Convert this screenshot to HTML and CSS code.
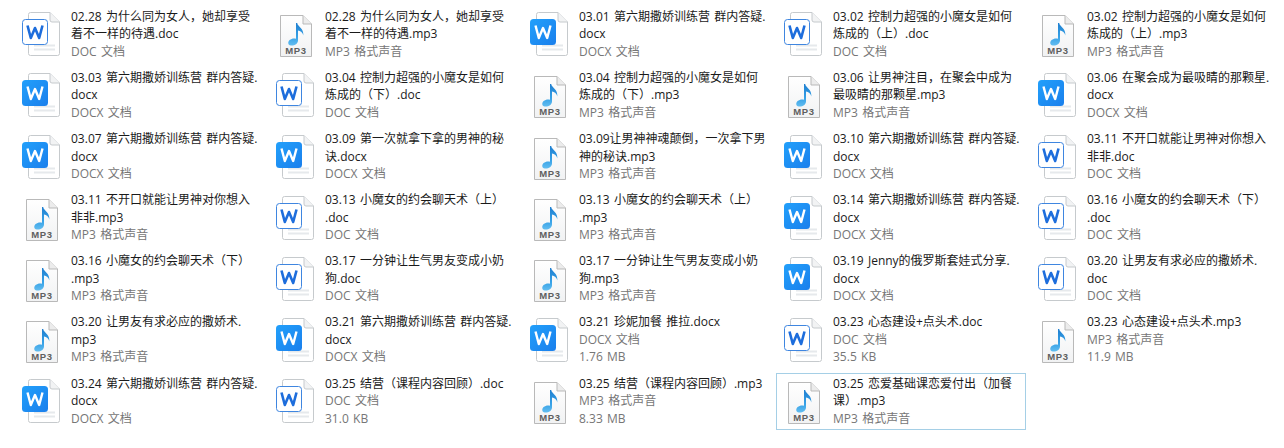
FILE: index.html
```html
<!DOCTYPE html>
<html>
    <head>
        <meta name="viewport" content="width=device-width, initial-scale=1.0">
        <title>files</title>
        <link rel="stylesheet" href="styles.css">
    </head>
    <body>
        <svg class="defs" width="0" height="0">
            <defs>
                <linearGradient id="note" x1="0" y1="0" x2="0" y2="1">
                    <stop offset="0" stop-color="#1f7fd0"/>
                    <stop offset=".6" stop-color="#35a0e6"/>
                    <stop offset="1" stop-color="#62bdf0"/>
                </linearGradient>
                <linearGradient id="blue" x1="0" y1="0" x2="1" y2="1">
                    <stop offset="0" stop-color="#22a0fb"/>
                    <stop offset="1" stop-color="#1a7fec"/>
                </linearGradient>
                <linearGradient id="paper" x1="0" y1="0" x2="0" y2="1">
                    <stop offset="0" stop-color="#fff"/>
                    <stop offset="1" stop-color="#f1f2f3"/>
                </linearGradient>
            </defs>
            <symbol id="page" viewBox="0 0 32 44">
                <path d="M2.500 .5H22L31.500 10V41.500a2 2 0 0 1-2 2H2.500a2 2 0 0 1-2-2V2.500a2 2 0 0 1 2-2Z" fill="#fff" stroke="#c6cacd"/>
                <path d="M22 .5V8a2 2 0 0 0 2 2H31.500" fill="#f2f3f4" stroke="#c6cacd"/>
                <path d="M6 33.500H27M6 37.500H27" stroke="#e6e9ec" stroke-width="2"/>
            </symbol>
            <symbol id="doc" viewBox="0 0 40 46">
                <use href="#page" x="6" y="0" width="32" height="44"/>
                <rect x=".5" y="7.500" width="25" height="25" rx="3" fill="#fff" stroke="#3f86e0"/>
                <path d="M5.500 13.500L8.800 26L13 16L17.200 26L20.500 13.500" fill="none" stroke="#1d6ddc" stroke-width="2.600" stroke-linejoin="round"/>
            </symbol>
            <symbol id="docx" viewBox="0 0 40 46">
                <use href="#page" x="6" y="0" width="32" height="44"/>
                <rect x="0" y="7" width="26" height="26" rx="3.500" fill="url(#blue)"/>
                <path d="M5.500 13.500L8.800 26L13 16L17.200 26L20.500 13.500" fill="none" stroke="#fff" stroke-width="2.400" stroke-linejoin="round"/>
            </symbol>
            <symbol id="mp3" viewBox="0 0 32 42">
                <path d="M.5 .5H23L31.500 9V41.500H.5Z" fill="url(#paper)" stroke="#b9b9b9"/>
                <path d="M23 .5V9H31.500" fill="#ececec" stroke="#b9b9b9"/>
                <path d="M16 8H17.200C17.800 12 24 13 23.300 20.500C22.800 17.500 20.500 16 18 15.500V25.500C18 29 14 31 10.800 30.500C7.500 30 7.800 26.500 9.600 25C11.500 23.500 14 23 16 23.800Z" fill="url(#note)"/>
            </symbol>
        </svg>
        <div class="grid">
            <div class="item"><svg class="icon"><use href="#doc"/></svg><div class="info"><p class="name">02.28 为什么同为女人，她却享受<br>着不一样的待遇.doc</p><p class="meta">DOC 文档</p></div></div>
            <div class="item"><svg class="icon mp3"><use href="#mp3"/></svg><span class="mp3-tag">MP3</span><div class="info"><p class="name">02.28 为什么同为女人，她却享受<br>着不一样的待遇.mp3</p><p class="meta">MP3 格式声音</p></div></div>
            <div class="item"><svg class="icon"><use href="#docx"/></svg><div class="info"><p class="name">03.01 第六期撒娇训练营 群内答疑.<br>docx</p><p class="meta">DOCX 文档</p></div></div>
            <div class="item"><svg class="icon"><use href="#doc"/></svg><div class="info"><p class="name">03.02 控制力超强的小魔女是如何<br>炼成的（上）.doc</p><p class="meta">DOC 文档</p></div></div>
            <div class="item"><svg class="icon mp3"><use href="#mp3"/></svg><span class="mp3-tag">MP3</span><div class="info"><p class="name">03.02 控制力超强的小魔女是如何<br>炼成的（上）.mp3</p><p class="meta">MP3 格式声音</p></div></div>

            <div class="item"><svg class="icon"><use href="#docx"/></svg><div class="info"><p class="name">03.03 第六期撒娇训练营 群内答疑.<br>docx</p><p class="meta">DOCX 文档</p></div></div>
            <div class="item"><svg class="icon"><use href="#doc"/></svg><div class="info"><p class="name">03.04 控制力超强的小魔女是如何<br>炼成的（下）.doc</p><p class="meta">DOC 文档</p></div></div>
            <div class="item"><svg class="icon mp3"><use href="#mp3"/></svg><span class="mp3-tag">MP3</span><div class="info"><p class="name">03.04 控制力超强的小魔女是如何<br>炼成的（下）.mp3</p><p class="meta">MP3 格式声音</p></div></div>
            <div class="item"><svg class="icon mp3"><use href="#mp3"/></svg><span class="mp3-tag">MP3</span><div class="info"><p class="name">03.06 让男神注目，在聚会中成为<br>最吸睛的那颗星.mp3</p><p class="meta">MP3 格式声音</p></div></div>
            <div class="item"><svg class="icon"><use href="#docx"/></svg><div class="info"><p class="name">03.06 在聚会成为最吸睛的那颗星.<br>docx</p><p class="meta">DOCX 文档</p></div></div>

            <div class="item"><svg class="icon"><use href="#docx"/></svg><div class="info"><p class="name">03.07 第六期撒娇训练营 群内答疑.<br>docx</p><p class="meta">DOCX 文档</p></div></div>
            <div class="item"><svg class="icon"><use href="#docx"/></svg><div class="info"><p class="name">03.09 第一次就拿下拿的男神的秘<br>诀.docx</p><p class="meta">DOCX 文档</p></div></div>
            <div class="item"><svg class="icon mp3"><use href="#mp3"/></svg><span class="mp3-tag">MP3</span><div class="info"><p class="name">03.09让男神神魂颠倒，一次拿下男<br>神的秘诀.mp3</p><p class="meta">MP3 格式声音</p></div></div>
            <div class="item"><svg class="icon"><use href="#docx"/></svg><div class="info"><p class="name">03.10 第六期撒娇训练营 群内答疑.<br>docx</p><p class="meta">DOCX 文档</p></div></div>
            <div class="item"><svg class="icon"><use href="#doc"/></svg><div class="info"><p class="name">03.11 不开口就能让男神对你想入<br>非非.doc</p><p class="meta">DOC 文档</p></div></div>

            <div class="item"><svg class="icon mp3"><use href="#mp3"/></svg><span class="mp3-tag">MP3</span><div class="info"><p class="name">03.11 不开口就能让男神对你想入<br>非非.mp3</p><p class="meta">MP3 格式声音</p></div></div>
            <div class="item"><svg class="icon"><use href="#doc"/></svg><div class="info"><p class="name">03.13 小魔女的约会聊天术（上）<br>.doc</p><p class="meta">DOC 文档</p></div></div>
            <div class="item"><svg class="icon mp3"><use href="#mp3"/></svg><span class="mp3-tag">MP3</span><div class="info"><p class="name">03.13 小魔女的约会聊天术（上）<br>.mp3</p><p class="meta">MP3 格式声音</p></div></div>
            <div class="item"><svg class="icon"><use href="#docx"/></svg><div class="info"><p class="name">03.14 第六期撒娇训练营 群内答疑.<br>docx</p><p class="meta">DOCX 文档</p></div></div>
            <div class="item"><svg class="icon"><use href="#doc"/></svg><div class="info"><p class="name">03.16 小魔女的约会聊天术（下）<br>.doc</p><p class="meta">DOC 文档</p></div></div>

            <div class="item"><svg class="icon mp3"><use href="#mp3"/></svg><span class="mp3-tag">MP3</span><div class="info"><p class="name">03.16 小魔女的约会聊天术（下）<br>.mp3</p><p class="meta">MP3 格式声音</p></div></div>
            <div class="item"><svg class="icon"><use href="#doc"/></svg><div class="info"><p class="name">03.17 一分钟让生气男友变成小奶<br>狗.doc</p><p class="meta">DOC 文档</p></div></div>
            <div class="item"><svg class="icon mp3"><use href="#mp3"/></svg><span class="mp3-tag">MP3</span><div class="info"><p class="name">03.17 一分钟让生气男友变成小奶<br>狗.mp3</p><p class="meta">MP3 格式声音</p></div></div>
            <div class="item"><svg class="icon"><use href="#docx"/></svg><div class="info"><p class="name">03.19 Jenny的俄罗斯套娃式分享.<br>docx</p><p class="meta">DOCX 文档</p></div></div>
            <div class="item"><svg class="icon"><use href="#doc"/></svg><div class="info"><p class="name">03.20 让男友有求必应的撒娇术.<br>doc</p><p class="meta">DOC 文档</p></div></div>

            <div class="item"><svg class="icon mp3"><use href="#mp3"/></svg><span class="mp3-tag">MP3</span><div class="info"><p class="name">03.20 让男友有求必应的撒娇术.<br>mp3</p><p class="meta">MP3 格式声音</p></div></div>
            <div class="item"><svg class="icon"><use href="#docx"/></svg><div class="info"><p class="name">03.21 第六期撒娇训练营 群内答疑.<br>docx</p><p class="meta">DOCX 文档</p></div></div>
            <div class="item"><svg class="icon"><use href="#docx"/></svg><div class="info"><p class="name">03.21 珍妮加餐 推拉.docx</p><p class="meta">DOCX 文档</p><p class="meta">1.76 MB</p></div></div>
            <div class="item"><svg class="icon"><use href="#doc"/></svg><div class="info"><p class="name">03.23 心态建设+点头术.doc</p><p class="meta">DOC 文档</p><p class="meta">35.5 KB</p></div></div>
            <div class="item"><svg class="icon mp3"><use href="#mp3"/></svg><span class="mp3-tag">MP3</span><div class="info"><p class="name">03.23 心态建设+点头术.mp3</p><p class="meta">MP3 格式声音</p><p class="meta">11.9 MB</p></div></div>

            <div class="item"><svg class="icon"><use href="#docx"/></svg><div class="info"><p class="name">03.24 第六期撒娇训练营 群内答疑.<br>docx</p><p class="meta">DOCX 文档</p></div></div>
            <div class="item"><svg class="icon"><use href="#doc"/></svg><div class="info"><p class="name">03.25 结营（课程内容回顾）.doc</p><p class="meta">DOC 文档</p><p class="meta">31.0 KB</p></div></div>
            <div class="item"><svg class="icon mp3"><use href="#mp3"/></svg><span class="mp3-tag">MP3</span><div class="info"><p class="name">03.25 结营（课程内容回顾）.mp3</p><p class="meta">MP3 格式声音</p><p class="meta">8.33 MB</p></div></div>
            <div class="item selected"><svg class="icon mp3"><use href="#mp3"/></svg><span class="mp3-tag">MP3</span><div class="info"><p class="name">03.25 恋爱基础课恋爱付出（加餐<br>课）.mp3</p><p class="meta">MP3 格式声音</p></div></div>
        </div>
    </body>
</html>
```
FILE: styles.css
```css
*{
    margin: 0;
    padding: 0;
    box-sizing: border-box;
}
body{
    background-color: #fff;
    font-family: "Open Sans", "Noto Sans CJK SC", sans-serif;
    font-size: 12px;
    word-spacing: 1.2px;
    overflow: hidden;
}
.defs{
    position: absolute;
}
.grid{
    display: grid;
    grid-template-columns: repeat(5, 250px);
    grid-auto-rows: 57px;
    column-gap: 4px;
    row-gap: 4.17px;
    padding: 6.2px 0 0 14px;
}
.item{
    position: relative;
    display: flex;
    border: 1px solid transparent;
    padding-left: 56px;
    padding-top: .5px;
}
.selected{
    border-color: #a5cfe6;
}
.icon{
    position: absolute;
    left: 7px;
    top: 5px;
    width: 40px;
    height: 46px;
}
.icon.mp3{
    left: 11px;
    top: 8px;
    width: 32px;
    height: 42px;
}
.mp3-tag{
    position: absolute;
    left: 11px;
    top: 38px;
    width: 32px;
    text-align: center;
    font-family: "Liberation Sans", sans-serif;
    font-size: 9.5px;
    line-height: 11px;
    font-weight: bold;
    letter-spacing: .6px;
    color: #5f5f5f;
}
.info{
    flex: 1;
    white-space: nowrap;
}
.name{
    line-height: 17.5px;
    color: #1a1a1a;
}
.meta{
    line-height: 17.5px;
    color: #767676;
}
```
